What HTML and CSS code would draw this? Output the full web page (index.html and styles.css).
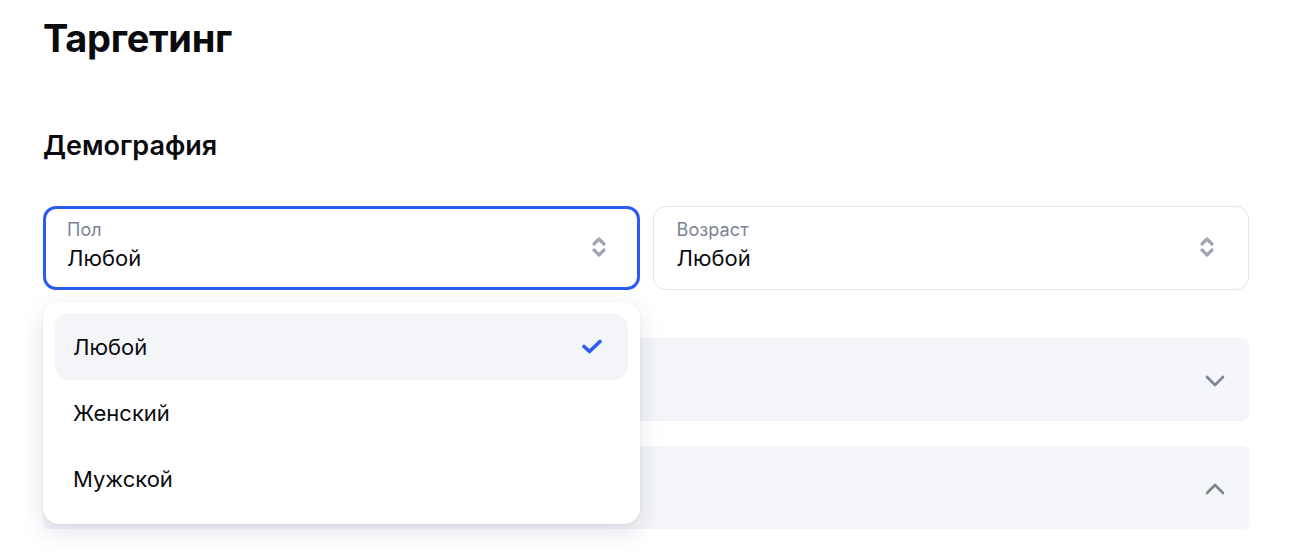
FILE: index.html
```html
<!DOCTYPE html>
<html lang="ru">
<head>
<meta charset="utf-8">
<title>Таргетинг</title>
<link rel="stylesheet" href="styles.css">
</head>
<body>
<main class="page">
  <h1 class="title">Таргетинг</h1>
  <h2 class="section-title">Демография</h2>
  <div class="selects">
    <div class="select-wrap">
      <div class="select select--active">
        <div class="select-text">
          <span class="select-label">Пол</span>
          <span class="select-value">Любой</span>
        </div>
        <svg class="stepper" width="16" height="22" viewBox="0 0 16 22"><path d="M3 8 L8 3 L13 8" fill="none" stroke="#9fa7b6" stroke-width="3.2" stroke-linecap="round" stroke-linejoin="round"/><path d="M3 14 L8 19 L13 14" fill="none" stroke="#9fa7b6" stroke-width="3.2" stroke-linecap="round" stroke-linejoin="round"/></svg>
      </div>
      <ul class="dropdown">
        <li class="option option--selected">Любой
          <svg class="check" width="22" height="16" viewBox="0 0 22 16"><path d="M3 7.5 L8.5 12.5 L19 2.5" fill="none" stroke="#2a5bf2" stroke-width="3.6" stroke-linecap="round" stroke-linejoin="round"/></svg>
        </li>
        <li class="option">Женский</li>
        <li class="option">Мужской</li>
      </ul>
    </div>
    <div class="select-wrap">
      <div class="select">
        <div class="select-text">
          <span class="select-label">Возраст</span>
          <span class="select-value">Любой</span>
        </div>
        <svg class="stepper" width="16" height="22" viewBox="0 0 16 22"><path d="M3 8 L8 3 L13 8" fill="none" stroke="#9fa7b6" stroke-width="3.2" stroke-linecap="round" stroke-linejoin="round"/><path d="M3 14 L8 19 L13 14" fill="none" stroke="#9fa7b6" stroke-width="3.2" stroke-linecap="round" stroke-linejoin="round"/></svg>
      </div>
    </div>
  </div>
  <div class="accordions">
    <div class="accordion">
      <svg class="chev" width="22" height="14" viewBox="0 0 22 14"><path d="M3 3 L11 11 L19 3" fill="none" stroke="#7d8595" stroke-width="2.6" stroke-linecap="round" stroke-linejoin="round"/></svg>
    </div>
    <div class="accordion">
      <svg class="chev" width="22" height="14" viewBox="0 0 22 14"><path d="M3 11 L11 3 L19 11" fill="none" stroke="#7d8595" stroke-width="2.6" stroke-linecap="round" stroke-linejoin="round"/></svg>
    </div>
  </div>
</main>
</body>
</html>
```

FILE: styles.css
```css
* { box-sizing: border-box; }
html, body { margin: 0; padding: 0; background: #fff; }
body {
  font-family: Inter, "Noto Sans", "Liberation Sans", sans-serif;
  color: #0b0b0f;
  width: 1296px;
  height: 552px;
  overflow: hidden;
}
.page {
  padding: 16px 47px 0 43px;
}
.title {
  margin: 0;
  font-size: 38px;
  line-height: 44px;
  font-weight: 700;
  letter-spacing: -0.3px;
}
.section-title {
  margin: 68px 0 0;
  font-size: 27px;
  line-height: 36px;
  font-weight: 600;
}
.selects {
  margin-top: 42px;
  display: grid;
  grid-template-columns: 1fr 1fr;
  gap: 13px;
}
.select-wrap { position: relative; }
.select {
  height: 84px;
  border: 1px solid #e1e4eb;
  border-radius: 13px;
  padding: 0 23px 0 23px;
  display: flex;
  align-items: center;
  justify-content: space-between;
  background: #fff;
}
.select--active {
  border: 3px solid #2a5bf2;
  padding: 0 21px;
}
.select-text {
  display: flex;
  flex-direction: column;
  gap: 3px;
  padding-bottom: 5px;
}
.select-label {
  font-size: 18px;
  line-height: 22px;
  color: #7a8394;
  letter-spacing: 0.1px;
}
.select-value {
  font-size: 22px;
  line-height: 28px;
  color: #0b0b0f;
}
.stepper { margin-right: 10px; margin-top: -2px; }
.select--active .stepper { margin-right: 9px; }
.dropdown {
  position: absolute;
  top: 96px;
  left: 0;
  right: 0;
  margin: 0;
  padding: 12px;
  list-style: none;
  background: #fff;
  border-radius: 16px;
  box-shadow: 0 8px 24px rgba(40, 50, 90, 0.13), 0 1px 3px rgba(40, 50, 90, 0.06);
  z-index: 10;
}
.option {
  height: 66px;
  border-radius: 13px;
  padding: 0 18px;
  display: flex;
  align-items: center;
  justify-content: space-between;
  font-size: 22px;
  color: #0b0b0f;
}
.option--selected { background: #f4f5f9; }
.check { margin-right: 7px; }
.accordions {
  margin-top: 48px;
  display: flex;
  flex-direction: column;
  gap: 25px;
}
.accordion {
  height: 83px;
  background: #f4f5f9;
  border-radius: 6px;
  display: flex;
  align-items: center;
  justify-content: flex-end;
  padding-right: 23px;
}
.chev { margin-top: 2px; }
```
